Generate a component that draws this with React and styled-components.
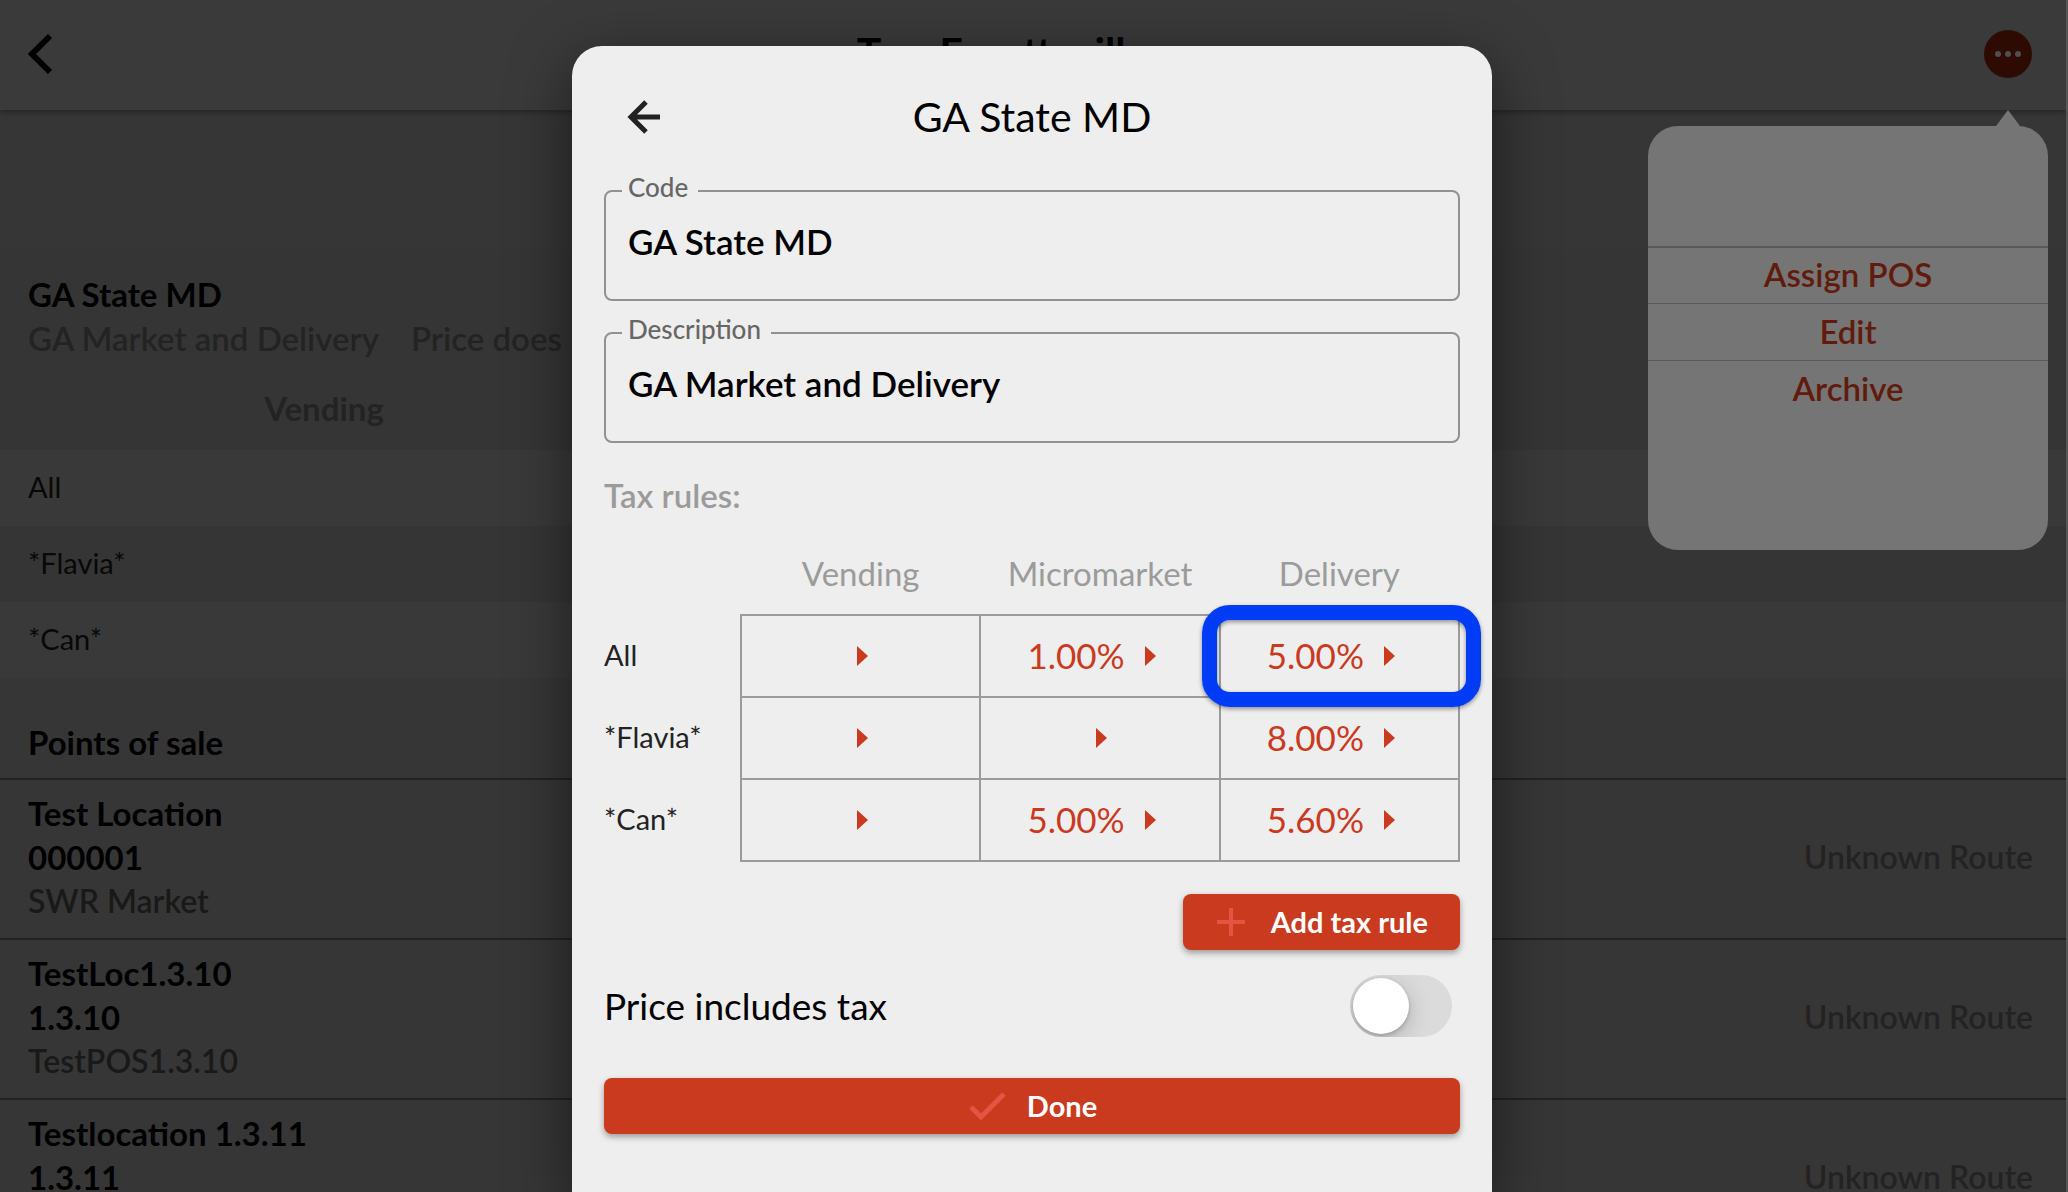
import React, { useState } from "react";
import styled, { createGlobalStyle } from "styled-components";

const GlobalStyle = createGlobalStyle`
  * {
    box-sizing: border-box;
  }
  body {
    margin: 0;
    overflow: hidden;
    background: #363636;
    font-family: Lato, "Open Sans", sans-serif;
    font-size: 33px;
    color: #000000;
  }
  button, input {
    font-family: inherit;
  }
`;

const Page = styled.div`
  position: relative;
  height: 100vh;
  overflow: hidden;
  border-right: 2px solid #585858;
`;

const Header = styled.header`
  display: flex;
  align-items: center;
  justify-content: space-between;
  height: 110px;
  padding: 0 34px 2px 20px;
  background: #3a3a3a;
  box-shadow: 0 2px 6px rgba(0, 0, 0, 0.35);
`;

const IconButton = styled.button`
  display: flex;
  align-items: center;
  justify-content: center;
  width: 48px;
  height: 48px;
  padding: 0;
  border: none;
  border-radius: 50%;
  background: ${props => props.$background || "transparent"};
`;

const PageTitle = styled.h1`
  margin: 0;
  padding: 0 48px 4px 0;
  font-weight: 700;
  font-size: 41px;
  line-height: 52px;
`;

const Summary = styled.section`
  margin-top: 140px;
  padding: 22px 28px 0;
  height: 124px;
  background: #353535;
`;

const Line = styled.div`
  font-weight: ${props => (props.$strong ? 700 : 600)};
  font-size: ${props => (props.$strong ? 33 : 32)}px;
  line-height: 44px;
  white-space: nowrap;
  color: ${props => props.color || "#000000"};
`;

const Details = styled(Line)`
  display: flex;
  gap: 32px;
  font-size: 33px;
`;

const RateTable = styled.table`
  width: 100%;
  border-collapse: collapse;
  table-layout: fixed;
  background: #353535;

  th,
  td {
    height: 76px;
    padding: 0;
  }
  thead th {
    padding-bottom: 8px;
    font-weight: 700;
    color: #232323;
  }
  tbody th {
    padding: 0 0 4px 28px;
    text-align: left;
    font-weight: 400;
    font-size: 29px;
    color: #080808;
  }
  tbody tr:nth-child(odd) {
    background: #393939;
  }
`;

const Col = styled.col`
  width: ${props => props.width};
`;

const SectionTitle = styled.h2`
  margin: 0;
  padding: 42px 28px 14px;
  border-bottom: 2px solid #222222;
  font-size: 33px;
  line-height: 44px;
`;

const List = styled.ul`
  margin: 0;
  padding: 0;
  list-style: none;
`;

const ListItem = styled.li`
  display: flex;
  align-items: center;
  justify-content: space-between;
  padding: 11px 33px 15px 28px;
  border-bottom: 2px solid #222222;
`;

const Popover = styled.div`
  position: absolute;
  top: 126px;
  right: 18px;
  width: 400px;
  height: 424px;
  padding-top: 120px;
  border-radius: 30px;
  background: #757575;

  &::before {
    content: "";
    position: absolute;
    top: -16px;
    right: 28px;
    border: 12px solid transparent;
    border-top: none;
    border-bottom: 16px solid #757575;
  }
`;

const PopoverItem = styled.button`
  display: block;
  width: 100%;
  height: 57px;
  padding: 0 0 3px;
  border: none;
  border-top: ${props => (props.$first ? 2 : 1)}px solid #595959;
  background: none;
  font-weight: 600;
  font-size: 33px;
  color: #611b0c;
`;

const Overlay = styled.div`
  position: absolute;
  top: 46px;
  right: 2px;
  bottom: 0;
  left: 0;
  display: flex;
  justify-content: center;
  pointer-events: none;
`;

const Dialog = styled.form`
  width: 920px;
  padding: 0 32px;
  border-radius: 30px 30px 0 0;
  background: #eeeeee;
  box-shadow: 0 16px 60px rgba(0, 0, 0, 0.5);
  pointer-events: auto;
`;

const DialogHeader = styled.div`
  display: grid;
  grid-template-columns: 48px 1fr 48px;
  align-items: center;
  padding: 46px 16px 33px;
`;

const DialogTitle = styled.h2`
  margin: 0;
  text-align: center;
  font-weight: 400;
  font-size: 41px;
  line-height: 50px;
`;

const Field = styled.fieldset`
  height: 126px;
  margin: 0 0 16px;
  padding: 0 22px 0 16px;
  border: 2px solid #919191;
  border-radius: 8px;
`;

const Legend = styled.legend`
  height: 32px;
  padding: 0 10px 0 6px;
  font-weight: 500;
  font-size: 26px;
  line-height: 24px;
  color: #666666;
`;

const TextInput = styled.input`
  width: 100%;
  height: 68px;
  padding: 0 6px;
  border: none;
  outline: none;
  background: transparent;
  font-weight: 600;
  font-size: 35px;
  color: #000000;
`;

const Subheading = styled.h3`
  margin: 30px 0 18px;
  font-weight: 600;
  font-size: 33px;
  line-height: 44px;
  color: #9b9b9b;
`;

const RulesTable = styled.table`
  width: 100%;
  border-collapse: collapse;
  table-layout: fixed;

  th {
    padding: 0 0 3px;
    font-weight: 400;
    font-size: 29px;
    text-align: left;
    color: #222222;
  }
  thead th {
    height: 80px;
    font-size: 33px;
    text-align: center;
    color: #9b9b9b;
  }
  td {
    position: relative;
    height: 82px;
    padding: 0;
    border: 2px solid #9b9b9b;
  }
`;

const RateButton = styled.button`
  display: flex;
  align-items: center;
  justify-content: center;
  width: 100%;
  height: 78px;
  padding: 0;
  border: none;
  background: none;
  font-size: 35px;
  color: #c93a1f;
`;

const Rate = styled.span`
  padding-bottom: 3px;
`;

const Highlight = styled.div`
  position: absolute;
  z-index: 1;
  top: -11px;
  right: -23px;
  bottom: -11px;
  left: -19px;
  border: 15px solid #003cf5;
  border-radius: 28px;
  box-shadow: 0 2px 4px rgba(0, 0, 0, 0.4), inset 0 2px 4px rgba(0, 0, 0, 0.4);
  pointer-events: none;
`;

const PrimaryButton = styled.button`
  display: flex;
  align-items: center;
  justify-content: center;
  gap: ${props => props.$gap};
  width: ${props => (props.$wide ? "100%" : "auto")};
  height: 56px;
  margin-left: auto;
  padding: 0 32px;
  border: none;
  border-radius: 8px;
  background: #c93a1f;
  box-shadow: 0 3px 6px rgba(0, 0, 0, 0.35);
  font-weight: 700;
  font-size: 29px;
  line-height: 52px;
  color: #ffffff;
`;

const Actions = styled.div`
  display: flex;
  padding: 32px 0 24px;
`;

const SwitchRow = styled.label`
  display: flex;
  align-items: center;
  justify-content: space-between;
  height: 64px;
  margin-bottom: 40px;
  padding-right: 8px;
  font-size: 37px;
  line-height: 60px;
`;

const Switch = styled.input`
  appearance: none;
  display: flex;
  align-items: center;
  justify-content: ${props => (props.checked ? "flex-end" : "flex-start")};
  width: 102px;
  height: 62px;
  margin: 0;
  padding: 3px;
  overflow: hidden;
  border-radius: 31px;
  background: ${props => (props.checked ? "#c93a1f" : "#dbdbdb")};

  &::before {
    content: "";
    width: 56px;
    height: 56px;
    border-radius: 50%;
    background: #ffffff;
    box-shadow: 0 6px 24px rgba(0, 0, 0, 0.2), 0 2px 4px rgba(0, 0, 0, 0.2);
  }
`;

const columns = ["Vending", "Micromarket", "Delivery"];

const rules = [
  { name: "All", rates: ["", "1.00%", "5.00%"] },
  { name: "*Flavia*", rates: ["", "", "8.00%"] },
  { name: "*Can*", rates: ["", "5.00%", "5.60%"] }
];

const locations = [
  { name: "Test Location", code: "000001", pos: "SWR Market" },
  { name: "TestLoc1.3.10", code: "1.3.10", pos: "TestPOS1.3.10" },
  { name: "Testlocation 1.3.11", code: "1.3.11", pos: "TestPOS1.3.11" }
];

const ChevronLeft = () => (
  <svg width="48" height="48" viewBox="0 0 48 48" fill="none">
    <path d="M30 6L12 24l18 18" stroke="#000000" strokeWidth="6" />
  </svg>
);

const Dots = () => (
  <svg width="48" height="48" viewBox="0 0 48 48" fill="#4f4f4f">
    <circle cx="14" cy="24" r="3" />
    <circle cx="24" cy="24" r="3" />
    <circle cx="34" cy="24" r="3" />
  </svg>
);

const ArrowLeft = () => (
  <svg width="48" height="48" viewBox="0 0 48 48" fill="none">
    <path d="M40 24H12M26 9L11 24l15 15" stroke="#222222" strokeWidth="5" />
  </svg>
);

const ArrowRight = () => (
  <svg width="48" height="48" viewBox="0 0 48 48" fill="#c93a1f">
    <path d="M20 34l11-10-11-10z" />
  </svg>
);

const Plus = () => (
  <svg width="32" height="32" viewBox="0 0 32 32" fill="none">
    <path d="M2 16h28M16 2v28" stroke="#e55343" strokeWidth="4" />
  </svg>
);

const Check = () => (
  <svg width="40" height="40" viewBox="0 0 40 40" fill="none">
    <path d="M4 21l10 10L37 8" stroke="#e55343" strokeWidth="5" />
  </svg>
);

function TextField({ id, label, defaultValue }) {
  return (
    <Field>
      <Legend>
        <label htmlFor={id}>{label}</label>
      </Legend>
      <TextInput id={id} defaultValue={defaultValue} />
    </Field>
  );
}

function TaxDialog() {
  const [included, setIncluded] = useState(false);

  return (
    <Dialog onSubmit={e => e.preventDefault()}>
      <DialogHeader>
        <IconButton type="button" aria-label="Back">
          <ArrowLeft />
        </IconButton>
        <DialogTitle>GA State MD</DialogTitle>
      </DialogHeader>
      <TextField id="code" label="Code" defaultValue="GA State MD" />
      <TextField
        id="description"
        label="Description"
        defaultValue="GA Market and Delivery"
      />
      <Subheading>Tax rules:</Subheading>
      <RulesTable>
        <colgroup>
          <Col width="137px" />
          <Col />
          <Col />
          <Col />
        </colgroup>
        <thead>
          <tr>
            <th />
            {columns.map(column => (
              <th key={column}>{column}</th>
            ))}
          </tr>
        </thead>
        <tbody>
          {rules.map((rule, row) => (
            <tr key={rule.name}>
              <th scope="row">{rule.name}</th>
              {rule.rates.map((rate, i) => (
                <td key={columns[i]}>
                  <RateButton
                    type="button"
                    aria-label={`${rule.name} ${columns[i]} ${rate}`}
                  >
                    {rate && <Rate>{rate}</Rate>}
                    <ArrowRight />
                  </RateButton>
                  {row === 0 && i === 2 && <Highlight />}
                </td>
              ))}
            </tr>
          ))}
        </tbody>
      </RulesTable>
      <Actions>
        <PrimaryButton type="button" $gap="24px">
          <Plus />
          Add tax rule
        </PrimaryButton>
      </Actions>
      <SwitchRow>
        Price includes tax
        <Switch
          type="checkbox"
          role="switch"
          checked={included}
          onChange={e => setIncluded(e.target.checked)}
        />
      </SwitchRow>
      <PrimaryButton type="submit" $wide $gap="20px">
        <Check />
        Done
      </PrimaryButton>
    </Dialog>
  );
}

export default function App() {
  return (
    <Page>
      <GlobalStyle />
      <Header>
        <IconButton aria-label="Back">
          <ChevronLeft />
        </IconButton>
        <PageTitle>Tax: Fayetteville</PageTitle>
        <IconButton $background="#2e0b02" aria-label="More">
          <Dots />
        </IconButton>
      </Header>
      <Summary>
        <Line $strong>GA State MD</Line>
        <Details color="#232323">
          <span>GA Market and Delivery</span>
          <span>Price does</span>
        </Details>
      </Summary>
      <RateTable>
        <colgroup>
          <Col width="150px" />
          <Col width="348px" />
          <Col width="348px" />
          <Col width="348px" />
          <Col />
        </colgroup>
        <thead>
          <tr>
            <th />
            {columns.map(column => (
              <th key={column}>{column}</th>
            ))}
            <th />
          </tr>
        </thead>
        <tbody>
          {rules.map(rule => (
            <tr key={rule.name}>
              <th scope="row">{rule.name}</th>
              <td colSpan={4} />
            </tr>
          ))}
        </tbody>
      </RateTable>
      <SectionTitle>Points of sale</SectionTitle>
      <List>
        {locations.map(location => (
          <ListItem key={location.name}>
            <div>
              <Line $strong>{location.name}</Line>
              <Line $strong>{location.code}</Line>
              <Line color="#191919">{location.pos}</Line>
            </div>
            <Line color="#232323">Unknown Route</Line>
          </ListItem>
        ))}
      </List>
      <Popover>
        <PopoverItem $first>Assign POS</PopoverItem>
        <PopoverItem>Edit</PopoverItem>
        <PopoverItem>Archive</PopoverItem>
      </Popover>
      <Overlay>
        <TaxDialog />
      </Overlay>
    </Page>
  );
}
